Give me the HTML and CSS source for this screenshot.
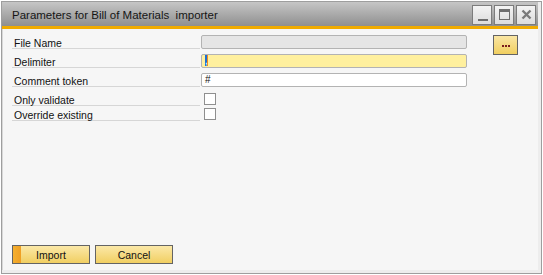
FILE: index.html
```html
<!DOCTYPE html>
<html>
<head>
<meta charset="utf-8">
<link rel="stylesheet" href="styles.css">
</head>
<body>
<div class="window">
  <div class="titlebar">
    <span class="title">Parameters for Bill of Materials&nbsp; importer</span>
    <div class="controls">
      <span class="ctl">
        <svg width="17" height="17" viewBox="0 0 17 17"><rect x="4" y="13" width="10" height="2" fill="#6e6e6e"/></svg>
      </span>
      <span class="ctl">
        <svg width="17" height="17" viewBox="0 0 17 17"><rect x="3.5" y="3.5" width="10" height="10" fill="none" stroke="#6e6e6e"/><rect x="4" y="4" width="9" height="2" fill="#6e6e6e"/></svg>
      </span>
      <span class="ctl">
        <svg width="17" height="17" viewBox="0 0 17 17"><path d="M4.5 4.5 L12.5 12.5 M12.5 4.5 L4.5 12.5" stroke="#7a7a7a" stroke-width="2.4"/></svg>
      </span>
    </div>
  </div>
  <div class="accent"></div>
  <div class="content">
    <div class="form">
      <div class="row">
        <div class="label">File Name</div>
        <div class="field field-disabled"></div>
        <button class="browse" aria-label="...">
          <svg width="9" height="2" viewBox="0 0 9 2"><rect x="0" y="0" width="2" height="2" fill="#7a1c1c"/><rect x="3" y="0" width="2" height="2" fill="#7a1c1c"/><rect x="6" y="0" width="2" height="2" fill="#7a1c1c"/></svg>
        </button>
      </div>
      <div class="row">
        <div class="label">Delimiter</div>
        <div class="field field-active"><span class="sel">,</span></div>
      </div>
      <div class="row">
        <div class="label">Comment token</div>
        <div class="field">#</div>
      </div>
      <div class="row row-check">
        <div class="label">Only validate</div>
        <span class="check"></span>
      </div>
      <div class="row row-check">
        <div class="label">Override existing</div>
        <span class="check"></span>
      </div>
    </div>
    <div class="actions">
      <button class="btn btn-primary">Import</button>
      <button class="btn">Cancel</button>
    </div>
  </div>
</div>
</body>
</html>
```

FILE: styles.css
```css
html, body {
  margin: 0;
  padding: 0;
  background: #ffffff;
}
body {
  padding: 1px;
  font-family: "Liberation Sans", Arial, sans-serif;
  color: #111;
}
.window {
  box-sizing: border-box;
  width: 541px;
  height: 273px;
  border: 1px solid #9e9e9e;
  background: #ededed;
  padding: 0 3px 3px 0;
  display: flex;
  flex-direction: column;
}
.titlebar {
  height: 24px;
  display: flex;
  align-items: center;
  justify-content: space-between;
  padding-left: 10px;
  background: linear-gradient(#c6c6c6, #8f8f8f);
}
.title {
  font-size: 11.5px;
  color: #151515;
  padding-top: 1px;
}
.controls {
  display: flex;
  gap: 2px;
  padding-right: 2px;
  padding-top: 1px;
}
.ctl {
  box-sizing: border-box;
  width: 20px;
  height: 20px;
  border: 1px solid #7c7c7c;
  background: linear-gradient(#f4f4f4, #dcdcdc);
  display: flex;
  align-items: center;
  justify-content: center;
}
.ctl svg { display: block; }
.accent {
  height: 3px;
  background: #f0ab00;
}
.content {
  flex: 1;
  background: #f6f6f6;
  border-left: 1px solid #d8d8d8;
  display: flex;
  flex-direction: column;
  padding: 6px 0 6px 9px;
}
.form {
  display: flex;
  flex-direction: column;
  gap: 5px;
}
.row {
  display: flex;
  height: 14px;
  align-items: flex-start;
}
.row-check + .row-check { margin-top: -4px; }
.label {
  box-sizing: border-box;
  width: 188px;
  height: 14px;
  border-bottom: 1px solid #d6d6d6;
  font-size: 10.5px;
  line-height: 12px;
  padding: 2px 0 0 2px;
  color: #111;
  white-space: nowrap;
}
.field {
  box-sizing: border-box;
  width: 266px;
  height: 14px;
  margin-left: 1px;
  border: 1px solid #b3b3b3;
  border-radius: 2px;
  background: #ffffff;
  font-size: 10px;
  line-height: 12px;
  padding-left: 3px;
}
.field-disabled { background: #e5e5e5; }
.field-active { background: #fff09e; }
.sel {
  display: inline-block;
  background: #1c6fd2;
  color: #fff;
  border-right: 1px solid #f08a20;
  height: 11px;
  line-height: 11px;
  width: 2px;
  vertical-align: top;
}
.browse {
  box-sizing: border-box;
  width: 25px;
  height: 20px;
  margin: 0 0 0 26px;
  padding: 1px 0 0 1px;
  border: 1px solid #646464;
  background: linear-gradient(#fae6a4, #f1cf60);
  display: flex;
  align-items: center;
  justify-content: center;
}
.browse svg { display: block; }
.check {
  box-sizing: border-box;
  width: 12px;
  height: 12px;
  margin: 1px 0 0 4px;
  border: 1px solid #8f8f8f;
  background: #fff;
}
.actions {
  margin-top: auto;
  display: flex;
  gap: 5px;
}
.btn {
  box-sizing: border-box;
  width: 78px;
  height: 19px;
  border: 1px solid #646464;
  background: linear-gradient(#fbe8a8, #f1cf62);
  font-family: "Liberation Sans", Arial, sans-serif;
  font-size: 10.5px;
  color: #111;
  padding: 0;
  line-height: 16px;
}
.btn-primary {
  background: linear-gradient(to right, #f5b030 0, #ef9f24 8px, transparent 8px),
              linear-gradient(#fbe8a8, #f1cf62);
}
```
